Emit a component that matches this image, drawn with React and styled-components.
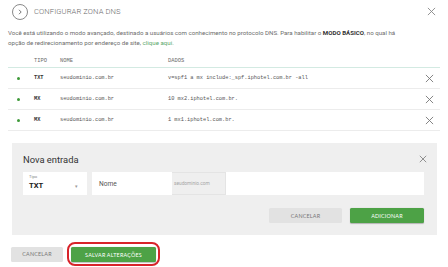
import React from "react";
import styled, { createGlobalStyle } from "styled-components";

const Global = createGlobalStyle`
  html, body { margin: 0; padding: 0; background: #fff; }
  body { font-family: Roboto, "Noto Sans", sans-serif; color: #555; }
  * { box-sizing: border-box; }
`;

const Page = styled.div`
  width: 448px;
  height: 267px;
  padding: 0 8px;
  overflow: hidden;
`;

const Header = styled.div`
  display: flex;
  align-items: center;
  height: 23px;
  padding: 0 4px;
`;

const CircleBtn = styled.span`
  width: 16px;
  height: 16px;
  border: 1px solid #8a8a8a;
  border-radius: 50%;
  display: flex;
  align-items: center;
  justify-content: center;
  margin-right: 6px;
`;

const Title = styled.h1`
  flex: 1;
  margin: 0;
  font-family: Roboto, sans-serif;
  font-weight: 300;
  font-size: 7.6px;
  color: #6a6a6a;
  letter-spacing: 0.1px;
`;

const CloseIcon = ({ size = 9, color = "#777" }) => (
  <svg width={size} height={size} viewBox="0 0 10 10">
    <path d="M1 1 L9 9 M9 1 L1 9" stroke={color} strokeWidth="1" fill="none" />
  </svg>
);

const Intro = styled.p`
  margin: 5px 0 0;
  font-size: 6.15px;
  line-height: 10px;
  color: #6d6d6d;
  font-family: Roboto, sans-serif;
  b { color: #333; font-weight: 700; }
  a { color: #5aa86a; text-decoration: none; }
`;

const Table = styled.div`
  margin-top: 6px;
`;

const cols = "26px 26px 108px 1fr 20px";

const HeadRow = styled.div`
  display: grid;
  grid-template-columns: ${cols};
  align-items: center;
  height: 14px;
  border-bottom: 1.5px solid #d3eae2;
  font-family: "Liberation Mono", monospace;
  font-size: 5.4px;
  color: #6a6a6a;
`;

const Row = styled.div`
  display: grid;
  grid-template-columns: ${cols};
  align-items: center;
  height: 21px;
  border-bottom: 1px solid #ececec;
  font-family: "Liberation Mono", monospace;
  font-size: 5.3px;
  color: #555;
`;

const Dot = styled.span`
  width: 3px;
  height: 3px;
  border-radius: 50%;
  background: #3f9a3a;
  margin-left: 9px;
`;

const Type = styled.span`
  font-weight: 700;
  color: #333;
`;

const XCell = styled.span`
  display: flex;
  justify-content: flex-end;
  padding-right: 6px;
`;

const Panel = styled.div`
  margin: 12px 3px 0 4px;
  background: #efefef;
  padding: 9px 13px 12px 11px;
`;

const PanelHead = styled.div`
  display: flex;
  align-items: center;
  justify-content: space-between;
  height: 14px;
  margin-right: -3px;
`;

const PanelTitle = styled.h2`
  margin: 0;
  font-family: Roboto, sans-serif;
  font-weight: 400;
  font-size: 9.4px;
  color: #333;
`;

const Inputs = styled.div`
  display: flex;
  align-items: stretch;
  height: 23px;
  margin-top: 6px;
`;

const Select = styled.div`
  width: 64px;
  background: #fff;
  padding: 2px 6px 0 6px;
  margin-right: 5px;
  display: flex;
  flex-direction: column;
`;

const SelectLabel = styled.span`
  font-size: 4.2px;
  color: #888;
  line-height: 5px;
`;

const SelectValue = styled.span`
  display: flex;
  align-items: center;
  justify-content: space-between;
  font-size: 7.6px;
  font-weight: 700;
  color: #222;
  margin-top: 2px;
`;

const Chevron = styled.span`
  font-size: 5px;
  color: #999;
  font-weight: 400;
  margin-right: 3px;
`;

const Field = styled.div`
  width: ${(p) => (p.$grow ? "auto" : p.$w + "px")};
  flex: ${(p) => (p.$grow ? 1 : "none")};
  background: #fff;
  display: flex;
  align-items: center;
  padding-left: 7px;
  font-size: 6.6px;
  color: #555;
`;

const Suffix = styled.span`
  width: 54px;
  display: flex;
  align-items: center;
  padding-left: 2px;
  font-size: 4.8px;
  color: #a5a5a5;
  border: 1px solid #e4e4e4;
  border-left: none;
`;

const Actions = styled.div`
  display: flex;
  justify-content: flex-end;
  gap: 8px;
  margin-top: 13px;
`;

const Button = styled.button`
  height: 15px;
  width: ${(p) => p.$w}px;
  border: none;
  border-radius: 1.5px;
  padding: 0;
  font-family: Lato, Roboto, sans-serif;
  font-size: 5.4px;
  letter-spacing: 0.2px;
  text-transform: uppercase;
  background: ${(p) => (p.$primary ? "#4da246" : "#e2e2e2")};
  color: ${(p) => (p.$primary ? "#fff" : "#777")};
  box-shadow: ${(p) => (p.$primary ? "0 0.5px 1px rgba(0,0,0,0.25)" : "none")};
`;

const Footer = styled.div`
  display: flex;
  align-items: center;
  gap: 4px;
  margin-top: 7px;
  padding-left: 3px;
`;

const Highlight = styled.span`
  display: inline-flex;
  padding: 3px 2px 2px;
  border: 2px solid #d8232a;
  border-radius: 8px;
`;

const rows = [
  { t: "TXT", n: "seudominio.com.br", d: "v=spf1 a mx include:_spf.iphotel.com.br -all" },
  { t: "MX", n: "seudominio.com.br", d: "10 mx2.iphotel.com.br." },
  { t: "MX", n: "seudominio.com.br", d: "1 mx1.iphotel.com.br." },
];

export default function App() {
  return (
    <Page>
      <Global />
      <Header>
        <CircleBtn>
          <svg width="6" height="6" viewBox="0 0 6 6">
            <path d="M2 0.8 L4.2 3 L2 5.2" stroke="#666" strokeWidth="0.9" fill="none" />
          </svg>
        </CircleBtn>
        <Title>CONFIGURAR ZONA DNS</Title>
        <CloseIcon size={9} color="#888" />
      </Header>
      <Intro>
        Você está utilizando o modo avançado, destinado a usuários com conhecimento no protocolo DNS. Para habilitar o <b>MODO BÁSICO</b>, no qual há
        <br />
        opção de redirecionamento por endereço de site, <a href="#">clique aqui.</a>
      </Intro>
      <Table>
        <HeadRow>
          <span />
          <span>TIPO</span>
          <span>NOME</span>
          <span>DADOS</span>
          <span />
        </HeadRow>
        {rows.map((r, i) => (
          <Row key={i}>
            <Dot />
            <Type>{r.t}</Type>
            <span>{r.n}</span>
            <span>{r.d}</span>
            <XCell>
              <CloseIcon size={9} color="#777" />
            </XCell>
          </Row>
        ))}
      </Table>
      <Panel>
        <PanelHead>
          <PanelTitle>Nova entrada</PanelTitle>
          <CloseIcon size={8} color="#777" />
        </PanelHead>
        <Inputs>
          <Select>
            <SelectLabel>Tipo</SelectLabel>
            <SelectValue>
              TXT <Chevron>▾</Chevron>
            </SelectValue>
          </Select>
          <Field $w={80}>Nome</Field>
          <Suffix>seudominio.com</Suffix>
          <Field $grow />
        </Inputs>
        <Actions>
          <Button $w={73}>Cancelar</Button>
          <Button $w={74} $primary>Adicionar</Button>
        </Actions>
      </Panel>
      <Footer>
        <Button $w={52}>Cancelar</Button>
        <Highlight>
          <Button $w={85} $primary>Salvar alterações</Button>
        </Highlight>
      </Footer>
    </Page>
  );
}
